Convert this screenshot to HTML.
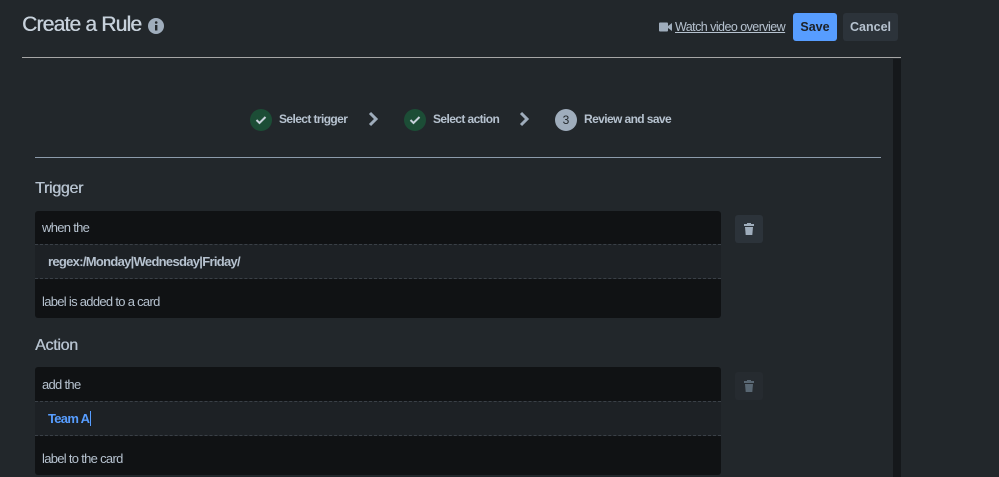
<!DOCTYPE html>
<html><head><style>
*{margin:0;padding:0;box-sizing:border-box}
body{width:999px;height:477px;background:#22272b;font-family:"Liberation Sans",sans-serif;color:#b6c2cf;position:relative;overflow:hidden}
.a{position:absolute;white-space:nowrap}
.title{left:22px;top:13px;font-size:21px;color:#c7d1db;letter-spacing:-0.8px;text-shadow:0.4px 0 0 #c7d1db}
.circ{width:22px;height:22px;border-radius:50%;background:#1c4d36;display:flex;align-items:center;justify-content:center}
.st{font-size:12px;font-weight:bold;color:#b6c2cf;letter-spacing:-0.6px}
.h{font-size:16px;color:#b6c2cf;letter-spacing:-0.3px;text-shadow:0.4px 0 0 #b6c2cf}
.row{left:35px;width:686px;background:#101214;font-size:13px;letter-spacing:-0.7px;color:#b6c2cf;padding-left:7px;display:flex;align-items:center}
.mid{background:#1d2125;border-top:1px dashed #3a4047;border-bottom:1px dashed #3a4047;padding-left:13px;font-weight:bold}
.trash{width:28px;height:28px;border-radius:3px;background:#2c333a;display:flex;align-items:center;justify-content:center}
</style></head><body>
<div class="a title">Create a Rule</div>
<svg class="a" style="left:148px;top:18px" width="16" height="16"><circle cx="8" cy="8" r="8" fill="#9fadbc"/><rect x="7" y="7" width="2.4" height="5.5" fill="#22272b"/><circle cx="8.2" cy="4.5" r="1.3" fill="#22272b"/></svg>
<svg class="a" style="left:659px;top:22px" width="13" height="10"><rect x="0" y="0.5" width="9" height="9" rx="1" fill="#9fadbc"/><path d="M9 4 L13 1 V9 L9 6Z" fill="#9fadbc"/></svg>
<div class="a" style="left:675px;top:20px;font-size:12.5px;letter-spacing:-0.55px;color:#b6c2cf;text-decoration:underline">Watch video overview</div>
<div class="a" style="left:793px;top:13px;width:44px;height:28px;background:#579dff;border-radius:3px;font-size:12.5px;font-weight:bold;color:#1d2125;display:flex;align-items:center;justify-content:center">Save</div>
<div class="a" style="left:843px;top:13px;width:55px;height:28px;background:#2c333a;border-radius:3px;font-size:12.5px;font-weight:bold;color:#b6c2cf;display:flex;align-items:center;justify-content:center">Cancel</div>
<div class="a" style="left:22px;top:57px;width:879px;height:1px;background:#a6a6a6"></div>
<div class="a" style="left:893px;top:59px;width:8px;height:418px;background:#15181b"></div>

<div class="a circ" style="left:250px;top:109px"><svg width="12" height="10"><path d="M1.5 5 L4.5 8 L10.5 2" stroke="#c7d1db" stroke-width="2" fill="none"/></svg></div>
<div class="a st" style="left:279px;top:112px">Select trigger</div>
<svg class="a" style="left:367px;top:111px" width="12" height="16"><path d="M3 2 L9 8 L3 14" stroke="#9fadbc" stroke-width="3" fill="none"/></svg>
<div class="a circ" style="left:404px;top:109px"><svg width="12" height="10"><path d="M1.5 5 L4.5 8 L10.5 2" stroke="#c7d1db" stroke-width="2" fill="none"/></svg></div>
<div class="a st" style="left:433px;top:112px">Select action</div>
<svg class="a" style="left:518px;top:111px" width="12" height="16"><path d="M3 2 L9 8 L3 14" stroke="#9fadbc" stroke-width="3" fill="none"/></svg>
<div class="a circ" style="left:555px;top:109px;background:#9fadbc;font-size:12px;color:#22272b">3</div>
<div class="a st" style="left:584px;top:112px">Review and save</div>
<div class="a" style="left:35px;top:157px;width:846px;height:1px;background:#8c9bab"></div>

<div class="a h" style="left:35px;top:180px">Trigger</div>
<div class="a row" style="top:211px;height:33px;border-radius:3px 3px 0 0">when the</div>
<div class="a row mid" style="top:244px;height:35px;color:#b6c2cf">regex:/Monday|Wednesday|Friday/</div>
<div class="a row" style="top:279px;height:39px;padding-top:5px;border-radius:0 0 3px 3px">label is added to a card</div>
<div class="a trash" style="left:735px;top:215px"><svg width="10" height="12"><rect x="0" y="1" width="10" height="2" fill="#9fadbc"/><rect x="3" y="0" width="4" height="2" fill="#9fadbc"/><path d="M1 4 H9 L8.3 12 H1.7Z" fill="#9fadbc"/></svg></div>

<div class="a h" style="left:35px;top:337px">Action</div>
<div class="a row" style="top:367px;height:34px;border-radius:3px 3px 0 0">add the</div>
<div class="a row mid" style="top:401px;height:35px;color:#579dff">Team A<span style="display:inline-block;width:1px;height:15px;background:#579dff;margin-left:1px"></span></div>
<div class="a row" style="top:436px;height:39px;padding-top:5px;border-radius:0 0 3px 3px">label to the card</div>
<div class="a trash" style="left:735px;top:372px;background:#262b30"><svg width="10" height="12"><rect x="0" y="1" width="10" height="2" fill="#596773"/><rect x="3" y="0" width="4" height="2" fill="#596773"/><path d="M1 4 H9 L8.3 12 H1.7Z" fill="#596773"/></svg></div>
</body></html>
